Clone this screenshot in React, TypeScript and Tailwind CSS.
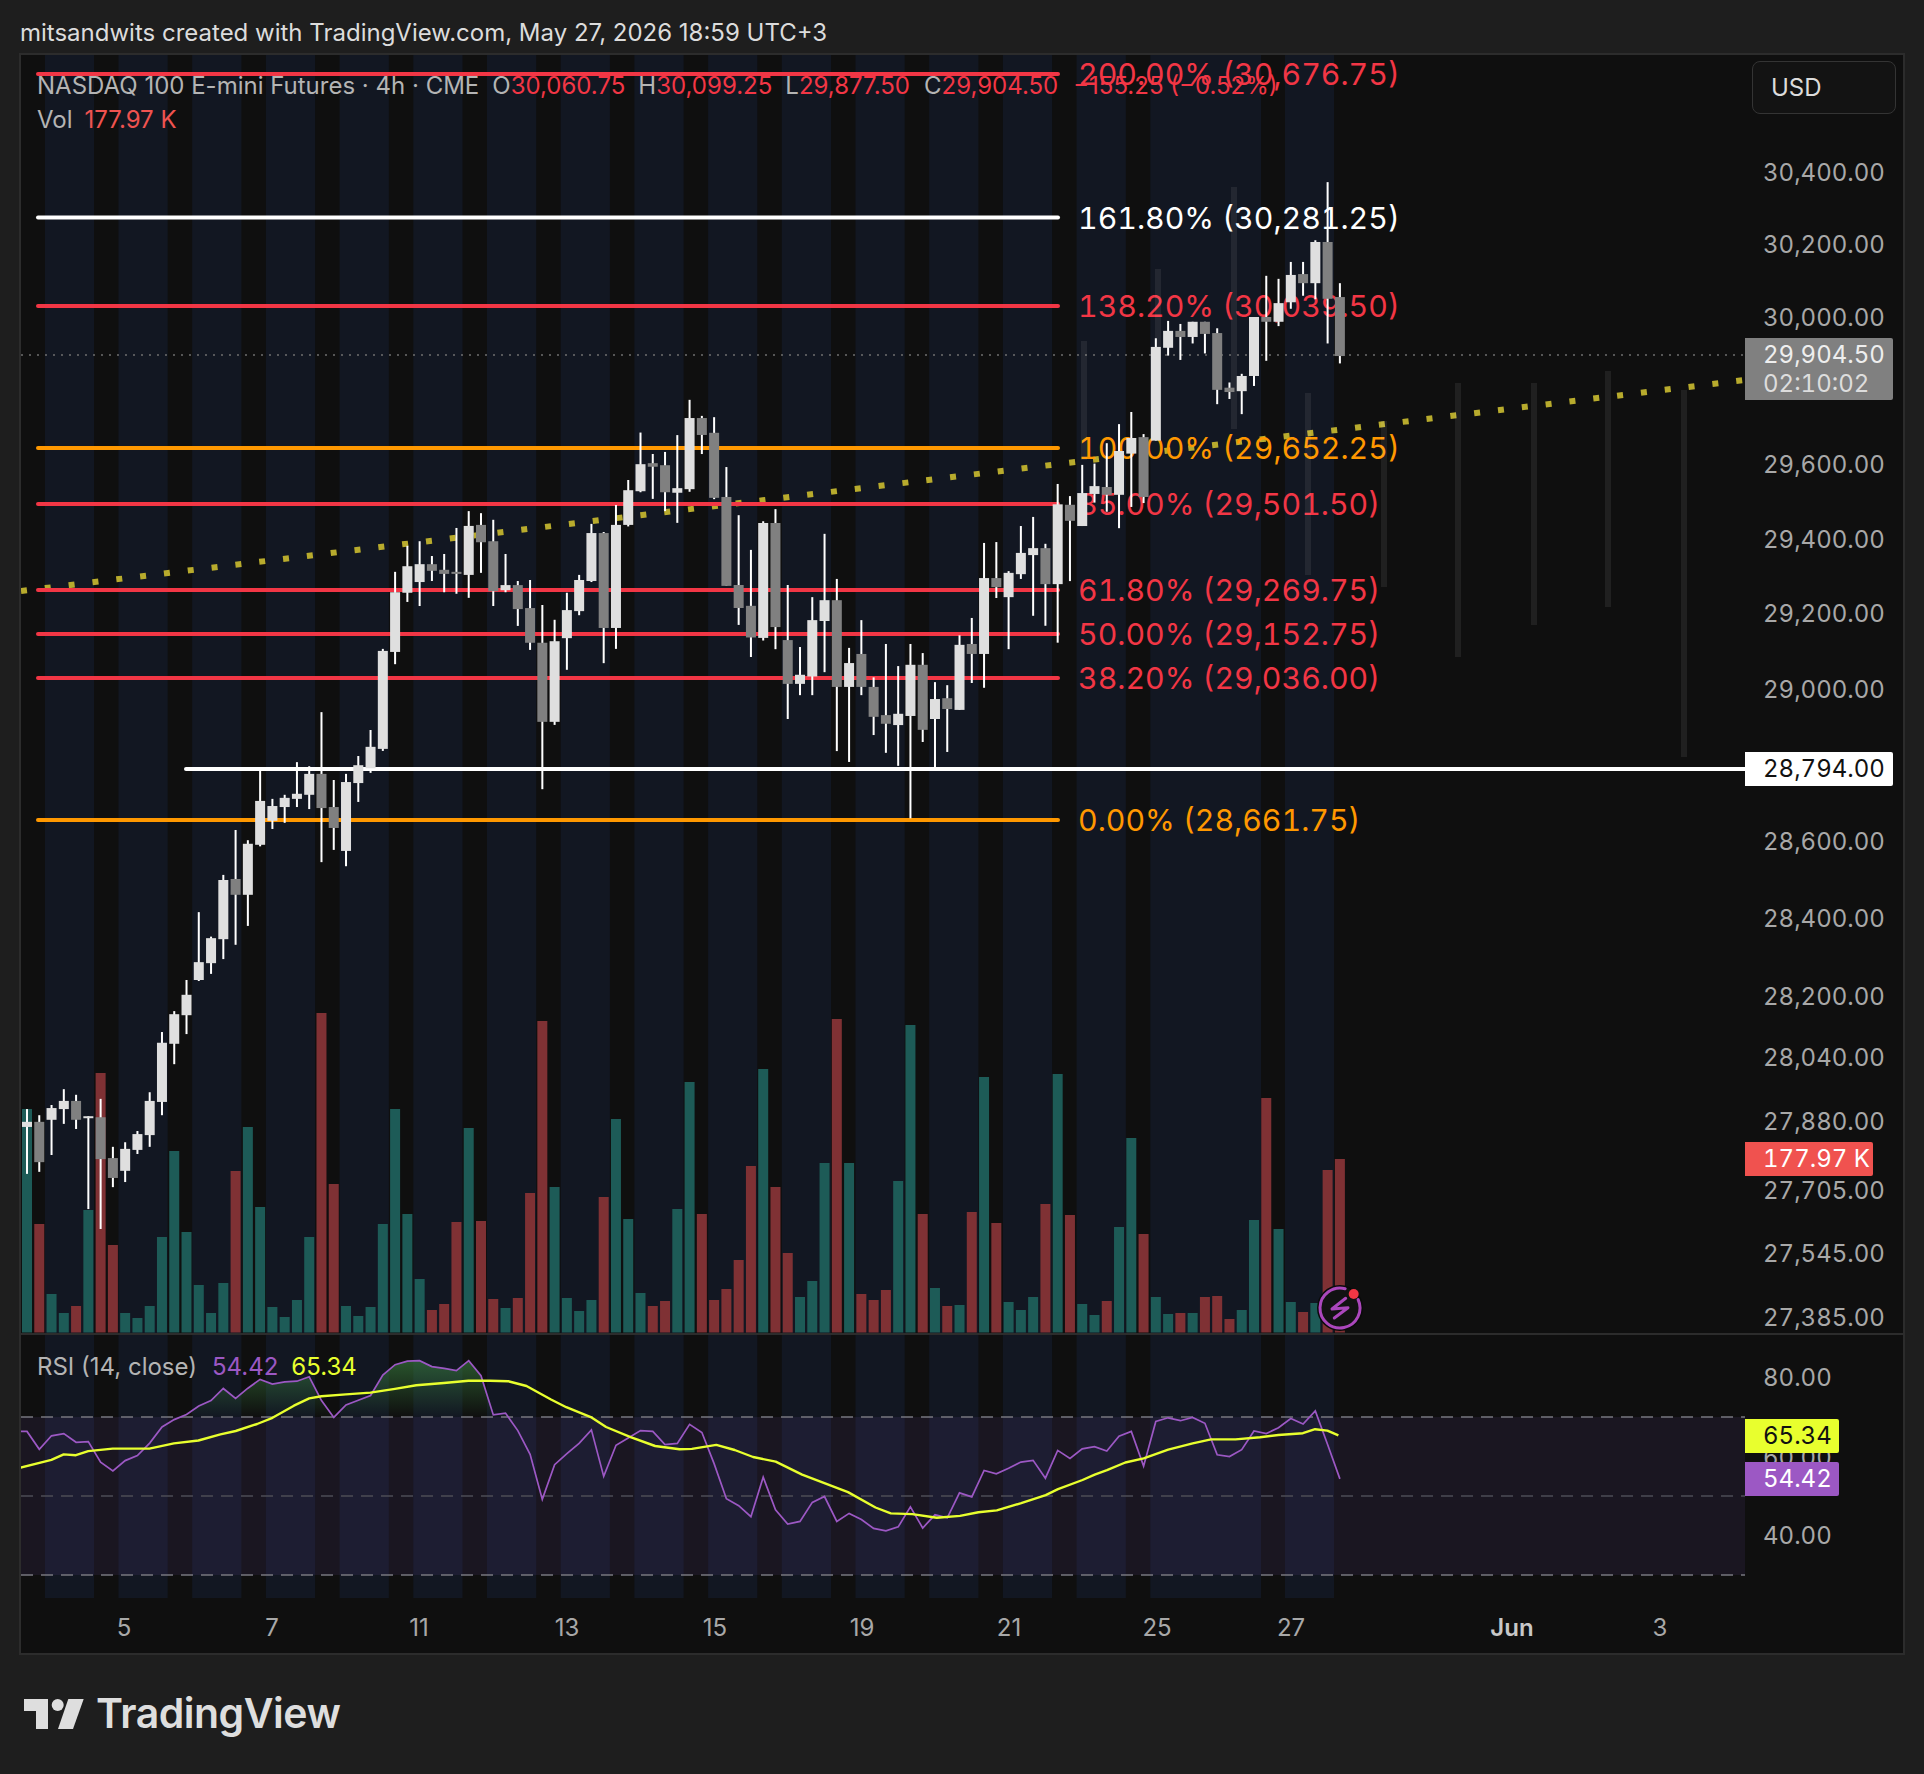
import React from 'react'

const BAR_X = (i: number) => 27 + 12.27 * i
const PANE_TOP = 55
const RSI_TOP = 1335

// dark (closed session) bands: x, width
const closedBands: number[][] = [
    [21, 24],
    ...Array.from({ length: 15 }, (_, k) => [94 + 73.7 * k, 24.5]),
    [1261, 24],
]

// [wickTop, wickBottom, bodyTop, bodyBottom, up]
const candlesLeft: number[][] = [
    [1233, 1360, 1258, 1268, 1], [1245, 1356, 1258, 1337, 0], [1225, 1323, 1231, 1254, 1], [1194, 1262, 1217, 1233, 1],
    [1205, 1272, 1217, 1254, 0], [1247, 1429, 1247, 1250, 1], [1213, 1468, 1249, 1331, 0], [1307, 1386, 1329, 1368, 0],
    [1298, 1376, 1311, 1354, 1], [1276, 1321, 1282, 1313, 1], [1200, 1307, 1217, 1284, 1], [1082, 1245, 1103, 1219, 1],
    [1041, 1145, 1047, 1105, 1], [980, 1086, 1009, 1049, 1], [847, 982, 945, 980, 1], [895, 968, 898, 947, 1],
    [774, 939, 784, 900, 1], [686, 911, 782, 813, 0], [706, 874, 713, 813, 1], [568, 718, 629, 715, 1],
    [625, 684, 639, 668, 1], [617, 672, 623, 641, 1], [553, 641, 615, 625, 1], [561, 645, 576, 617, 1],
    [455, 749, 576, 643, 0], [588, 725, 641, 682, 0], [576, 757, 592, 727, 1], [541, 631, 559, 594, 1],
    [490, 574, 523, 565, 1], [331, 531, 335, 527, 1], [180, 361, 220, 337, 1], [129, 239, 169, 221, 1],
    [120, 247, 165, 200, 1], [149, 198, 165, 178, 0], [145, 220, 176, 184, 0], [94, 223, 180, 184, 0],
    [61, 231, 90, 186, 1], [65, 182, 88, 122, 0], [78, 247, 120, 218, 0], [145, 220, 206, 216, 1],
    [198, 286, 206, 253, 0], [196, 333, 251, 319, 0], [245, 606, 319, 474, 0], [274, 480, 316, 474, 1],
    [221, 372, 255, 310, 1], [186, 265, 196, 257, 1], [86, 200, 104, 198, 1], [102, 359, 104, 290, 0],
    [49, 331, 88, 290, 1], [0, 91, 20, 88, 1], [-93, 24, -31, 22, 1], [-51, 37, -33, -26, 0],
    [-55, 61, -29, 24, 0], [-88, 84, 16, 25, 1],
]

const candlesRight: number[][] = [
    [530, 742, 572, 736, 1], [567, 655, 572, 611, 0], [570, 759, 606, 756, 0], [685, 959, 754, 959, 0],
    [796, 1049, 957, 1010, 0], [876, 1123, 1005, 1078, 0], [810, 1085, 814, 1079, 1], [782, 1105, 814, 1054, 0],
    [957, 1266, 1084, 1185, 0], [1100, 1211, 1164, 1185, 1], [985, 1211, 1038, 1168, 1], [839, 1158, 992, 1040, 1],
    [943, 1340, 992, 1192, 0], [1102, 1365, 1137, 1192, 1], [1038, 1211, 1116, 1192, 0], [1170, 1303, 1192, 1261, 0],
    [1093, 1344, 1257, 1277, 0], [1144, 1374, 1254, 1280, 1], [1093, 1495, 1141, 1259, 1], [1114, 1319, 1141, 1291, 0],
    [1181, 1378, 1220, 1266, 1], [1188, 1342, 1218, 1243, 0], [1073, 1245, 1095, 1245, 1], [1033, 1183, 1093, 1116, 0],
    [860, 1194, 941, 1116, 1], [858, 987, 941, 962, 0], [925, 1105, 929, 985, 1], [821, 943, 883, 932, 1],
    [800, 1028, 872, 888, 1], [862, 1051, 872, 955, 0], [724, 1090, 771, 955, 1], [752, 948, 772, 809, 0],
    [680, 821, 745, 821, 1], [677, 767, 729, 747, 1], [630, 788, 731, 749, 0], [586, 826, 648, 749, 1],
    [558, 777, 618, 654, 1], [609, 768, 616, 754, 0], [388, 624, 408, 624, 1], [348, 428, 371, 410, 1],
    [355, 438, 371, 385, 0], [350, 400, 350, 385, 1], [350, 423, 350, 378, 0], [365, 540, 376, 507, 0],
    [490, 528, 502, 512, 0], [470, 563, 475, 510, 1], [339, 498, 339, 475, 1], [244, 440, 339, 350, 0],
    [251, 360, 307, 350, 1], [212, 320, 242, 305, 1], [212, 290, 240, 261, 0], [162, 298, 166, 261, 1],
    [28, 400, 166, 297, 0], [261, 446, 293, 429, 0],
]

const candles = [
    ...candlesLeft.map((c) => [480 + c[0] / 1.96, 480 + c[1] / 1.96, 480 + c[2] / 1.96, 480 + c[3] / 1.96, c[4]]),
    ...candlesRight.map((c) => [170 + c[0] / 2.306, 170 + c[1] / 2.306, 170 + c[2] / 2.306, 170 + c[3] / 2.306, c[4]]),
]

// volume bar tops, positive = green, negative = red
const volumes = [
    327, -672, 882, 939, -918, 630, -219, -735, 939, 954, 918, 711, 453, 696, 855, 939, 849, -513, 381, 621, 921, 951, 900, 711,
    -39, -552, 918, 948, 921, 672, 327, 642, 837, -930, -912, -666, 384, -663, -897, 924, -894, -579, -63, 561, 894, 933, 900,
    -591, 357, 657, 879, -918, -903, 627, 246, -642, -900, -867, -780, -498, 207, -561, -759, 891, 843, 489, -57, 489, -882,
    -900, -870, 543, 75, -642, 864, -918, 915, -636, 231, -669, 906, 930, 891, -612, 222, -645, 912, 945, -903, 681, 414, -702,
    891, 942, -939, 939, -891, -888, -957, 930, 660, -294, 687, 906, -936, 909, -510, -477,
]

const fibs = [
    { label: '200.00% (30,676.75)', y: 74, line: 'stroke-[#f23645]', text: 'fill-[#f23645]' },
    { label: '161.80% (30,281.25)', y: 217.5, line: 'stroke-white', text: 'fill-white' },
    { label: '138.20% (30,039.50)', y: 306, line: 'stroke-[#f23645]', text: 'fill-[#f23645]' },
    { label: '100.00% (29,652.25)', y: 448, line: 'stroke-[#ff9800]', text: 'fill-[#ff9800]' },
    { label: '85.00% (29,501.50)', y: 504, line: 'stroke-[#f23645]', text: 'fill-[#f23645]' },
    { label: '61.80% (29,269.75)', y: 590, line: 'stroke-[#f23645]', text: 'fill-[#f23645]' },
    { label: '50.00% (29,152.75)', y: 634, line: 'stroke-[#f23645]', text: 'fill-[#f23645]' },
    { label: '38.20% (29,036.00)', y: 678, line: 'stroke-[#f23645]', text: 'fill-[#f23645]' },
    { label: '0.00% (28,661.75)', y: 820, line: 'stroke-[#ff9800]', text: 'fill-[#ff9800]' },
]

// projected ghost bars right of the last candle
const ghosts = [
    [1084, 341, 460], [1158, 269, 440], [1234, 187, 429], [1308, 393, 575], [1384, 421, 587],
    [1458, 383, 657], [1534, 383, 625], [1608, 371, 607], [1684, 390, 757],
]

const priceTicks = [
    ['30,400.00', 173], ['30,200.00', 245], ['30,000.00', 318], ['29,600.00', 465], ['29,400.00', 540], ['29,200.00', 614],
    ['29,000.00', 690], ['28,600.00', 842], ['28,400.00', 919], ['28,200.00', 997], ['28,040.00', 1058], ['27,880.00', 1122],
    ['27,705.00', 1191], ['27,545.00', 1254], ['27,385.00', 1318],
] as const

const timeTicks = [
    ['5', 124], ['7', 272], ['11', 419], ['13', 567], ['15', 715], ['19', 862], ['21', 1009], ['25', 1157], ['27', 1291], ['3', 1660],
] as const

const rsi = [
    632, 681, 644, 638, 662, 660, 716, 740, 712, 698, 664, 620, 600, 586, 563, 548, 515, 542, 514, 490, 503, 497, 495, 483, 548,
    594, 560, 547, 534, 478, 450, 440, 439, 455, 460, 466, 439, 480, 587, 582, 630, 695, 818, 723, 693, 665, 628, 755, 670, 650,
    630, 632, 668, 665, 613, 635, 720, 816, 835, 865, 757, 846, 885, 878, 826, 810, 878, 856, 873, 897, 904, 893, 838, 896, 860,
    868, 800, 811, 739, 748, 733, 716, 711, 760, 684, 706, 680, 674, 686, 645, 632, 727, 605, 595, 603, 594, 610, 696, 701, 682,
    631, 638, 622, 597, 612, 576, 668, 762,
]

const rsiMa = [
    [33, 731], [84, 710], [104, 695], [124, 697], [144, 686], [184, 679], [244, 679], [284, 665], [324, 657], [360, 640], [385, 631],
    [420, 612], [445, 595], [480, 562], [505, 542], [525, 536], [565, 531], [605, 526], [645, 516], [680, 506], [725, 500], [765, 494],
    [800, 494], [830, 495], [860, 508], [900, 545], [925, 566], [965, 593], [990, 620], [1030, 648], [1070, 672], [1110, 681], [1130, 680],
    [1170, 669], [1200, 683], [1230, 702], [1267, 715], [1310, 750], [1385, 798], [1430, 840], [1455, 856], [1490, 858], [1530, 868],
    [1568, 863], [1598, 853], [1628, 848], [1668, 828], [1708, 806], [1728, 790], [1768, 765], [1788, 750], [1808, 738], [1838, 717],
    [1868, 706], [1908, 682], [1948, 665], [1978, 654], [2018, 654], [2058, 648], [2088, 642], [2128, 637], [2148, 626], [2168, 630], [2186, 643],
]

const rsiY = (z: number) => 1200 + z / 2.7317
const rsiPoints = [[21, rsiY(632)], ...rsi.map((z, i) => [BAR_X(i), rsiY(z)])]
const rsiPath = rsiPoints.map((p) => `${p[0].toFixed(1)},${p[1].toFixed(1)}`).join(' ')
const maPath = rsiMa.map((p) => `${(p[0] / 1.6333).toFixed(1)},${rsiY(p[1]).toFixed(1)}`).join(' ')
const rsiArea = `21,1417 ${rsiPath} ${BAR_X(107).toFixed(1)},1417`

function Bands({ top, height }: { top: number; height: number }) {
    return (
        <>
            <rect x={21} y={top} width={1313} height={height} className="fill-[#121722]" />
            {closedBands.map((b) => (
                <rect key={b[0]} x={b[0]} y={top} width={b[1]} height={height} className="fill-[#0f0f0f]" />
            ))}
        </>
    )
}

function MainChart() {
    return (
        <svg viewBox="21 55 1724 1278" className="absolute inset-0 w-full h-full">
            <Bands top={55} height={1278} />
            {volumes.map((v, i) => {
                const top = 1000 + Math.abs(v) / 3
                return (
                    <rect
                        key={i}
                        x={BAR_X(i) - 5}
                        y={top}
                        width={10}
                        height={1332.5 - top}
                        className={v > 0 ? 'fill-[#1d5b57]' : 'fill-[#7f3134]'}
                    />
                )
            })}
            <line x1={21} y1={591} x2={1745} y2={380} strokeWidth={6} strokeDasharray="6 18" className="stroke-[#b8ab2d]" />
            <line x1={21} y1={355} x2={1745} y2={355} strokeWidth={1.5} strokeDasharray="2 6" className="stroke-[#6f6f6f]" />
            {fibs.map((f) => (
                <g key={f.label}>
                    <line x1={38} y1={f.y} x2={1058} y2={f.y} strokeWidth={4} strokeLinecap="round" className={f.line} />
                    <text x={1078} y={f.y} dominantBaseline="central" className={`font-['Inter',sans-serif] text-[30.3px] tabular-nums ${f.text}`}>
                        {f.label}
                    </text>
                </g>
            ))}
            <line x1={186} y1={769} x2={1745} y2={769} strokeWidth={4} strokeLinecap="round" className="stroke-white" />
            {ghosts.map((g) => (
                <rect key={g[0]} x={g[0] - 3} y={g[1]} width={6} height={g[2] - g[1]} className="fill-white/[0.07]" />
            ))}
            {candles.map((c, i) => {
                const x = BAR_X(i)
                return (
                    <g key={i}>
                        <rect x={x - 1} y={c[0]} width={2} height={c[1] - c[0]} className="fill-white" />
                        <rect
                            x={x - 5}
                            y={c[2]}
                            width={10}
                            height={Math.max(c[3] - c[2], 2)}
                            className={c[4] ? 'fill-[#dfdfdf]' : 'fill-[#808080]'}
                        />
                    </g>
                )
            })}
            {/* earnings badge */}
            <circle cx={1340} cy={1308} r={22} strokeWidth={2} className="fill-[#121212] stroke-[#0a0a0a]" />
            <path d="M1358.1 1299.5A20 20 0 1 1 1345.2 1288.7" fill="none" strokeWidth={3} strokeLinecap="round" className="stroke-[#ab47bc]" />
            <path d="M1345.7 1298.3L1332 1309L1348 1307.7L1334.3 1318" fill="none" strokeWidth={3} strokeLinejoin="round" strokeLinecap="round" className="stroke-[#ab47bc]" />
            <circle cx={1353.7} cy={1294} r={5} className="fill-[#f23645]" />
        </svg>
    )
}

function RsiChart() {
    return (
        <svg viewBox="21 1335 1724 263" className="absolute inset-0 w-full h-full">
            <defs>
                <linearGradient id="rsi-over" x1="0" y1="1360" x2="0" y2="1417" gradientUnits="userSpaceOnUse">
                    <stop offset="0" stopColor="#3f8f45" stopOpacity="0.55" />
                    <stop offset="1" stopColor="#3f8f45" stopOpacity="0" />
                </linearGradient>
                <clipPath id="rsi-over-clip">
                    <rect x="21" y="1335" width="1724" height="82" />
                </clipPath>
            </defs>
            <Bands top={1335} height={263} />
            <rect x={21} y={1417} width={1724} height={158} className="fill-[#7e57c2]/[0.1]" />
            <polygon points={rsiArea} fill="url(#rsi-over)" clipPath="url(#rsi-over-clip)" />
            <line x1={21} y1={1417} x2={1745} y2={1417} strokeWidth={1.5} strokeDasharray="12 8" className="stroke-[#77777f]" />
            <line x1={21} y1={1496} x2={1745} y2={1496} strokeWidth={1.5} strokeDasharray="12 8" className="stroke-[#4c4c55]" />
            <line x1={21} y1={1575} x2={1745} y2={1575} strokeWidth={1.5} strokeDasharray="12 8" className="stroke-[#77777f]" />
            <polyline points={rsiPath} fill="none" strokeWidth={1.7} className="stroke-[#9c58c4]" />
            <polyline points={maPath} fill="none" strokeWidth={2.4} strokeLinejoin="round" className="stroke-[#e8ff2e]" />
        </svg>
    )
}

function Legend() {
    const num = 'text-[#f23645]'
    return (
        <div className="absolute left-[16px] top-[18px] flex flex-col gap-[8px] text-[24px] leading-[26px] text-[#b4b4b4] whitespace-nowrap">
            <div className="flex">
                <span>NASDAQ 100 E-mini Futures · 4h · CME</span>
                <span className="ml-[13px]">O<span className={num}>30,060.75</span></span>
                <span className="ml-[13px]">H<span className={num}>30,099.25</span></span>
                <span className="ml-[13px]">L<span className={num}>29,877.50</span></span>
                <span className="ml-[14px]">C<span className={num}>29,904.50</span></span>
                <span className={`ml-[15px] ${num}`}>−155.25 (−0.52%)</span>
            </div>
            <div className="flex gap-[12px]">
                <span>Vol</span>
                <span className="text-[#ef5350]">177.97 K</span>
            </div>
        </div>
    )
}

function PriceAxis() {
    return (
        <div className="relative w-[158px] text-[24px] text-[#a8a8a8]">
            <div className="absolute left-[7px] top-[6px] w-[144px] h-[53px] rounded-lg border border-[#343434] bg-[#131313] pl-[18px] leading-[51px] text-[#dcdcdc]">
                USD
            </div>
            {priceTicks.map(([label, y]) => (
                <div key={label} className="absolute left-[18px] -translate-y-1/2 leading-none whitespace-nowrap tabular-nums" style={{ top: y - PANE_TOP }}>
                    {label}
                </div>
            ))}
            <div className="absolute left-0 top-[283px] w-[148px] h-[62px] rounded-r-[2px] bg-[#808080] pl-[18px] pt-[2px] text-[#eeeeee] leading-[29px] tabular-nums">
                <div>29,904.50</div>
                <div className="text-[#dddddd]">02:10:02</div>
            </div>
            <div className="absolute left-0 top-[697px] w-[148px] h-[34px] rounded-r-[2px] bg-white pl-[18px] leading-[34px] text-[#111111] tabular-nums">
                28,794.00
            </div>
            <div className="absolute left-0 top-[1087px] w-[128px] h-[34px] rounded-r-[2px] bg-[#f0524f] pl-[18px] leading-[34px] text-white tabular-nums">
                177.97 K
            </div>
        </div>
    )
}

function RsiAxis() {
    const ticks = [['80.00', 1378], ['60.00', 1458], ['40.00', 1536]] as const
    return (
        <div className="relative w-[158px] text-[24px] text-[#a8a8a8] tabular-nums">
            {ticks.map(([label, y]) => (
                <div key={label} className="absolute left-[18px] -translate-y-1/2 leading-none" style={{ top: y - RSI_TOP }}>
                    {label}
                </div>
            ))}
            <div className="absolute left-0 top-[84px] w-[94px] h-[34px] rounded-r-[2px] bg-[#e8ff2e] pl-[18px] leading-[34px] text-[#111111]">
                65.34
            </div>
            <div className="absolute left-0 top-[127px] w-[94px] h-[34px] rounded-r-[2px] bg-[#9c58c4] pl-[18px] leading-[34px] text-white">
                54.42
            </div>
        </div>
    )
}

function TimeAxis() {
    return (
        <div className="relative h-[55px] text-[24px] text-[#a8a8a8]">
            {timeTicks.map(([label, x]) => (
                <span key={label} className="absolute top-[30px] -translate-x-1/2 -translate-y-1/2 leading-none" style={{ left: x - 21 }}>
                    {label}
                </span>
            ))}
            <span className="absolute left-[1491px] top-[30px] -translate-x-1/2 -translate-y-1/2 leading-none font-semibold text-[#c8c8c8]">Jun</span>
        </div>
    )
}

export default function App() {
    return (
        <div className="w-[1924px] h-[1774px] bg-[#1e1e1e] font-['Inter',sans-serif] flex flex-col">
            <div className="h-[53px] pl-[20px] pt-[18px] text-[24px] leading-[29px] text-[#dcdcdc] whitespace-nowrap">
                mitsandwits created with TradingView.com, May 27, 2026 18:59 UTC+3
            </div>
            <div className="ml-[19px] w-[1886px] h-[1602px] border-2 border-[#2c2c2c] bg-[#0f0f0f] flex flex-col">
                <div className="flex h-[1278px]">
                    <div className="relative flex-1">
                        <MainChart />
                        <Legend />
                    </div>
                    <PriceAxis />
                </div>
                <div className="h-[2px] bg-[#2c2c2c]" />
                <div className="flex h-[263px]">
                    <div className="relative flex-1">
                        <RsiChart />
                        <div className="absolute left-[16px] top-[18px] flex text-[24px] leading-[28px] whitespace-nowrap">
                            <span className="text-[#b4b4b4]">RSI (14, close)</span>
                            <span className="ml-[15px] text-[#9c58c4]">54.42</span>
                            <span className="ml-[13px] text-[#e8ff2e]">65.34</span>
                        </div>
                    </div>
                    <RsiAxis />
                </div>
                <TimeAxis />
            </div>
            <div className="flex items-center h-[119px] pl-[24px] pb-[2px]">
                <svg viewBox="24 1698 60 30" className="w-[60px] h-[30px] fill-[#dedede]">
                    <polygon points="24,1698 48,1698 48,1728 36,1728 36,1710 24,1710" />
                    <circle cx="57.7" cy="1704" r="6" />
                    <polygon points="68.3,1698 83.7,1698 73,1728 58,1728" />
                </svg>
                <span className="ml-[12px] text-[41px] leading-none font-semibold text-[#dedede] tracking-[-0.5px]">TradingView</span>
            </div>
        </div>
    )
}
